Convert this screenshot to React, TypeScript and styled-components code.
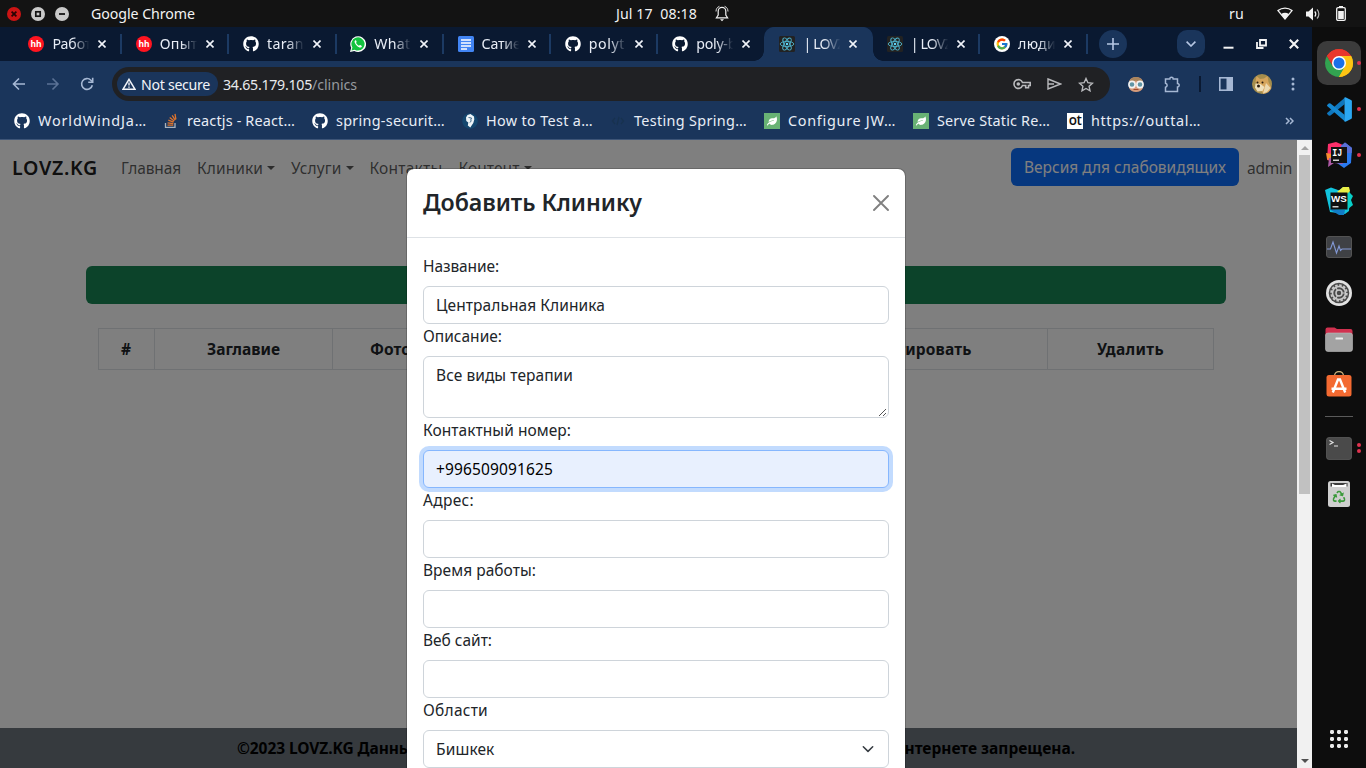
import React, { ReactNode, useLayoutEffect, useRef } from 'react';
import styled, { createGlobalStyle } from 'styled-components';
import { FaGithub, FaLeaf, FaRecycle } from 'react-icons/fa';
import { FcGoogle } from 'react-icons/fc';

const Global = createGlobalStyle`
  * { box-sizing: border-box; }
  html, body { margin: 0; padding: 0; overflow: hidden; background: #0d0d0d; }
  body { font-family: "Noto Sans", "Open Sans", sans-serif; }
  svg { display: block; flex: none; }
`;

/* ---------- text set to a fixed advance width ---------- */

const FitSpan = styled.span`
  display: inline-block;
  white-space: pre;
  flex: none;
`;

function Fit({ w, children }: { w: number; children: string }) {
  const ref = useRef<HTMLSpanElement>(null);
  useLayoutEffect(() => {
    const el = ref.current;
    if (!el) return;
    el.style.letterSpacing = '0px';
    const natural = el.getBoundingClientRect().width;
    el.style.letterSpacing = `${(w - natural) / children.length}px`;
  }, [w, children]);
  return <FitSpan ref={ref}>{children}</FitSpan>;
}

/* ---------- shell ---------- */

const Screen = styled.div`
  width: 1366px;
  height: 768px;
  display: grid;
  grid-template: 27px 741px / 1312px 54px;
  overflow: hidden;
`;

const TopBar = styled.header`
  grid-column: 1 / 3;
  display: grid;
  grid-template-columns: 616px 613px 1fr;
  align-items: center;
  background: #131313;
  color: #f2f2f2;
  font-size: 14.2px;
  line-height: 26px;
`;

const TopGroup = styled.div<{ $gap?: number; $pad?: number }>`
  display: flex;
  align-items: center;
  gap: ${(p) => p.$gap ?? 0}px;
  padding-left: ${(p) => p.$pad ?? 0}px;
`;

const StatusIcons = styled.div`
  display: flex;
  align-items: center;
  gap: 12px;
  margin-left: 33px;
`;

const AppName = styled.div`
  margin-left: 12px;
`;

const Browser = styled.main`
  display: flex;
  flex-direction: column;
  min-width: 0;
  background: #1a355b;
`;

/* ---------- tab strip ---------- */

const TabStrip = styled.div`
  height: 34px;
  display: flex;
  align-items: center;
  padding-left: 13.7px;
  background: #0a1931;
  color: #e8edf6;
  font-size: 14.2px;
`;

const TabBox = styled.div<{ $active?: boolean; $divider?: boolean }>`
  position: relative;
  width: 107.3px;
  height: 34px;
  display: flex;
  align-items: center;
  padding-left: 14.7px;
  background: ${(p) => (p.$active ? '#1a355b' : 'transparent')};
  border-radius: 10px 10px 0 0;
  ${(p) => p.$active && 'box-shadow: -1px 0 0 #1a355b, 1px 0 0 #1a355b;'}
  &::after {
    content: '';
    position: absolute;
    right: -1px;
    top: 7px;
    width: 2px;
    height: 20px;
    background: ${(p) => (p.$divider ? '#1c3a63' : 'transparent')};
  }
`;

const TabFoot = styled.i<{ $side: 'left' | 'right' }>`
  position: absolute;
  bottom: 0;
  ${(p) => p.$side}: -11px;
  width: 10px;
  height: 10px;
  background: radial-gradient(circle at ${(p) => (p.$side === 'left' ? '0 0' : '100% 0')}, transparent 9.5px, #1a355b 10px);
`;

const TabTitle = styled.div`
  width: 38px;
  margin: 0 8px 0 8px;
  overflow: hidden;
  line-height: 22px;
  mask-image: linear-gradient(90deg, #000 55%, transparent 98%);
`;

const RoundButton = styled.div<{ $radius: number; $left: number }>`
  width: 28px;
  height: 28px;
  margin-left: ${(p) => p.$left}px;
  border-radius: ${(p) => p.$radius}px;
  display: grid;
  place-items: center;
  background: #1a355b;
`;

const WindowControls = styled.div`
  display: flex;
  align-items: center;
  gap: 22px;
  margin-left: 18.5px;
`;

/* ---------- toolbar ---------- */

const Toolbar = styled.div`
  height: 46px;
  display: flex;
  align-items: center;
  padding: 0 17px 0 12px;
`;

const NavButtons = styled.div`
  width: 100px;
  display: flex;
  align-items: center;
  gap: 20px;
`;

const Omnibox = styled.div`
  width: 998px;
  height: 34px;
  display: flex;
  align-items: center;
  flex: none;
  padding: 0 16px 0 5px;
  border-radius: 17px;
  background: #202124;
  color: #e8eaed;
  font-size: 14.2px;
`;

const Chip = styled.div`
  width: 101px;
  height: 24px;
  display: flex;
  align-items: center;
  gap: 5px;
  padding-left: 5px;
  margin-right: 5px;
  border-radius: 12px;
  background: #1a355b;
  color: #f1f3f8;
`;

const UrlPath = styled.span`
  color: #969a9f;
`;

const OmniActions = styled.div`
  display: flex;
  align-items: center;
  gap: 16px;
  margin-left: auto;
`;

const ToolbarActions = styled.div`
  flex: 1;
  display: flex;
  align-items: center;
  justify-content: space-between;
  padding-left: 18px;
`;

const ToolbarDivider = styled.div`
  width: 2px;
  height: 16px;
  background: #0a1931;
`;

const Bookmarks = styled.div`
  height: 33px;
  display: flex;
  align-items: center;
  gap: 17px;
  padding: 0 18px 4px 14px;
  border-bottom: 1px solid #3e5577;
  color: #e8edf6;
  font-size: 14.4px;
`;

const Bookmark = styled.div`
  display: flex;
  align-items: center;
  gap: 8px;
  line-height: 22px;
`;

const LeafTile = styled.span`
  width: 16px;
  height: 16px;
  display: grid;
  place-items: center;
  background: #68b274;
  color: #fff;
`;

const OtTile = styled.span`
  width: 16px;
  height: 16px;
  background: #fff;
  color: #111;
  font: 600 13.5px/15px "Open Sans", sans-serif;
  letter-spacing: -0.5px;
  text-align: center;
`;

const More = styled.div`
  margin-left: auto;
`;

/* ---------- web page ---------- */

const Viewport = styled.section`
  position: relative;
  height: 628px;
  flex: none;
  overflow: hidden;
`;

const Page = styled.div`
  height: 100%;
  display: flex;
  flex-direction: column;
  background: #fff;
  color: #212529;
  font-size: 15.5px;
  line-height: 24px;
`;

const Navbar = styled.nav`
  height: 56px;
  display: flex;
  align-items: center;
  padding: 0 20px 0 12px;
`;

const Brand = styled.div`
  margin-right: 15px;
  font-size: 19.6px;
  font-weight: 600;
  color: rgba(0, 0, 0, 0.9);
`;

const NavLink = styled.div<{ $menu?: boolean }>`
  display: flex;
  align-items: center;
  padding: 0 8px;
  color: rgba(0, 0, 0, 0.65);
  &::after {
    content: '';
    display: ${(p) => (p.$menu ? 'block' : 'none')};
    margin-left: 4px;
    border: 4.8px solid transparent;
    border-top-color: currentColor;
    border-bottom: 0;
  }
`;

const NavRight = styled.div`
  display: flex;
  align-items: center;
  gap: 8px;
  margin-left: auto;
  color: rgba(0, 0, 0, 0.65);
`;

const PrimaryButton = styled.div`
  width: 228px;
  height: 38px;
  margin-top: -2px;
  padding: 7px 13px;
  border-radius: 6px;
  background: #0d6efd;
  color: #fff;
`;

const AddButton = styled.div`
  width: 1140px;
  height: 38px;
  margin: 70px auto 24px;
  border-radius: 6px;
  background: #198754;
`;

const Table = styled.div`
  width: 1116px;
  height: 42px;
  margin: 0 auto;
  display: grid;
  grid-template-columns: 56px 178px 116px 325px 274px 1fr;
  border: solid #dee2e6;
  border-width: 1px 0 1px 1px;
`;

const HeadCell = styled.div`
  display: grid;
  place-items: center;
  border-right: 1px solid #dee2e6;
  font-weight: 700;
`;

const Footer = styled.footer`
  height: 40px;
  margin-top: auto;
  padding: 0 237px;
  display: flex;
  align-items: center;
  justify-content: space-between;
  background: #6c757d;
  color: #000;
  font-weight: 700;
`;

/* ---------- modal ---------- */

const Backdrop = styled.div`
  position: absolute;
  inset: 0;
  display: flex;
  justify-content: center;
  align-items: flex-start;
  padding-top: 28px;
  background: rgba(0, 0, 0, 0.5);
`;

const Modal = styled.div`
  width: 500px;
  height: 800px;
  flex: none;
  border: 1px solid rgba(0, 0, 0, 0.175);
  border-radius: 8px;
  background: #fff;
  background-clip: padding-box;
  color: #212529;
  font-size: 15.5px;
  line-height: 24px;
`;

const ModalHeader = styled.div`
  height: 69px;
  display: flex;
  align-items: center;
  justify-content: space-between;
  padding: 0 16px;
  border-bottom: 1px solid #dee2e6;
`;

const ModalTitle = styled.h4`
  margin: 0 0 2px;
  font-size: 23.2px;
  font-weight: 600;
  line-height: 36px;
`;

const ModalBody = styled.div`
  padding: 16px;
`;

const Label = styled.div`
  height: 24px;
  margin-bottom: 8px;
`;

const Control = styled.div<{ $tall?: boolean; $focused?: boolean }>`
  height: ${(p) => (p.$tall ? 62 : 38)}px;
  display: flex;
  justify-content: space-between;
  padding: 6px 12px;
  border: 1px solid ${(p) => (p.$focused ? '#86b7fe' : '#ced4da')};
  border-radius: 6px;
  background: ${(p) => (p.$focused ? '#e8f0fe' : '#fff')};
  color: ${(p) => (p.$focused ? '#000' : '#212529')};
  ${(p) => p.$focused && 'box-shadow: 0 0 0 4px rgba(13, 110, 253, 0.25);'}
`;

const Corner = styled.span`
  align-self: flex-end;
  margin: 0 -11px -6px 0;
`;

const SelectArrow = styled.span`
  display: grid;
  place-items: center;
`;

/* ---------- scrollbar ---------- */

const Scrollbar = styled.div`
  position: absolute;
  top: 0;
  right: 0;
  bottom: 0;
  width: 15px;
  display: flex;
  flex-direction: column;
  align-items: center;
  background: #f1f1f1;
`;

const Arrow = styled.div<{ $down?: boolean }>`
  width: 15px;
  height: 15px;
  display: grid;
  place-items: center;
  &::before {
    content: '';
    border: 4px solid transparent;
    ${(p) => (p.$down ? 'border-top-color: #505050; border-bottom: 0;' : 'border-bottom-color: #a3a3a3; border-top: 0;')}
  }
`;

const Thumb = styled.div`
  width: 11px;
  height: 339px;
  margin-bottom: auto;
  background: #c1c1c1;
`;

/* ---------- dock ---------- */

const Dock = styled.aside`
  display: flex;
  flex-direction: column;
  align-items: center;
  padding-top: 13px;
  background: #0d0d0d;
`;

const DockItem = styled.div<{ $active?: boolean }>`
  position: relative;
  width: 44px;
  height: 44px;
  margin: 1px 0;
  display: grid;
  place-items: center;
  border-radius: 10px;
  background: ${(p) => (p.$active ? '#3b3b3b' : 'transparent')};
`;

const Running = styled.div`
  position: absolute;
  right: 0;
  top: 0;
  height: 44px;
  display: flex;
  flex-direction: column;
  justify-content: center;
  gap: 2px;
`;

const Dot = styled.i`
  width: 4px;
  height: 4px;
  border-radius: 50%;
  background: #e0324f;
`;

const DockDivider = styled.div`
  width: 28px;
  height: 1px;
  margin: 8px 0;
  background: #5a5a5a;
`;

const AppsGrid = styled.div`
  display: grid;
  grid-template-columns: repeat(3, 4px);
  gap: 3px;
  margin: auto 0 20px;
`;

const AppsDot = styled.i`
  width: 4px;
  height: 4px;
  border-radius: 1.4px;
  background: #ececec;
`;

/* ---------- icons ---------- */

const WinButton = ({ kind }: { kind: 'close' | 'max' | 'min' }) => (
  <svg width="14" height="14" viewBox="0 0 14 14">
    <circle cx="7" cy="7" r="7" fill={kind === 'close' ? '#cc1414' : '#c9c9c9'} />
    {kind === 'close' && <path d="M4.6 4.6l4.8 4.8M9.4 4.6L4.6 9.4" stroke="#260404" strokeWidth="1.7" />}
    {kind === 'max' && <rect x="4.8" y="4.8" width="4.4" height="4.4" fill="none" stroke="#131313" strokeWidth="1.7" />}
    {kind === 'min' && <path d="M4 7h6" stroke="#131313" strokeWidth="1.8" />}
  </svg>
);

const Bell = () => (
  <svg width="14" height="17" viewBox="0 0 14 17" fill="none" stroke="#f2f2f2" strokeWidth="1.2">
    <path d="M3.2 10V6.2a3.8 3.8 0 017.6 0V10l1.8 2.8H1.4L3.2 10z" />
    <path d="M4.4 1.3C2.2 2.2 1 4 1 6.5M9.6 1.3C11.8 2.2 13 4 13 6.5" strokeWidth=".9" />
    <path d="M5 14.3h4l-2 2z" fill="#f2f2f2" stroke="none" />
  </svg>
);

const Wifi = () => (
  <svg width="16" height="13" viewBox="0 0 16 13">
    <path d="M1 3.6C5 .3 11 .3 15 3.6L8 12z" fill="none" stroke="#f2f2f2" strokeWidth="1.3" />
    <path d="M4 7.2c2.4-1.8 5.6-1.8 8 0L8 12z" fill="#f2f2f2" />
  </svg>
);

const Volume = () => (
  <svg width="16" height="14" viewBox="0 0 16 14">
    <path d="M1 4.5h2.5L8 .5v13L3.5 9.5H1z" fill="#f2f2f2" />
    <path d="M9.7 4.5c1.4 1.3 1.4 3.7 0 5" fill="none" stroke="#f2f2f2" strokeWidth="1.3" />
    <path d="M12 2.5c2.5 2.5 2.5 6.5 0 9" fill="none" stroke="#b0b0b0" strokeWidth="1.2" />
  </svg>
);

const Battery = () => (
  <svg width="10" height="15" viewBox="0 0 10 15">
    <path d="M3 0h4v2H3z" fill="#f2f2f2" />
    <rect x=".7" y="1.7" width="8.6" height="12.6" rx="1.3" fill="none" stroke="#f2f2f2" strokeWidth="1.3" />
    <path d="M2.2 5h5.6v8H2.2z" fill="#f2f2f2" />
  </svg>
);

const Cross = () => (
  <svg width="8" height="8" viewBox="0 0 8 8" stroke="#f1f4fa" strokeWidth="1.6">
    <path d="M.5.5l7 7M7.5.5l-7 7" />
  </svg>
);

const HhIcon = () => (
  <svg width="16" height="16" viewBox="0 0 16 16">
    <circle cx="8" cy="8" r="8" fill="#ff1420" />
    <text x="8" y="11.3" textAnchor="middle" fontSize="8.5" fontWeight="700" fill="#fff" fontFamily="Noto Sans">hh</text>
  </svg>
);

const WhatsApp = () => (
  <svg width="16" height="16" viewBox="0 0 16 16">
    <path d="M0 16l1.2-4.2A7.9 7.9 0 118 16c-1.3 0-2.6-.3-3.7-.9z" fill="#fff" />
    <path d="M1.5 14.5l.9-3A6.6 6.6 0 118 14.6c-1.2 0-2.3-.3-3.3-.9z" fill="#13c33f" />
    <path d="M5.4 4.2c-.9.5-1 1.5-.6 2.5.9 2.2 2.5 3.9 4.7 4.7 1 .4 2 0 2.3-1 .1-.4 0-.5-.3-.7l-1.3-.6c-.6-.2-.7.8-1.2.7C7.6 9.2 6.7 8.2 6.1 7c-.2-.5.7-.8.5-1.3L6.1 4.5c-.1-.3-.4-.4-.7-.3z" fill="#fff" />
  </svg>
);

const Docs = () => (
  <svg width="16" height="16" viewBox="0 0 16 16">
    <rect width="16" height="16" rx="1.5" fill="#4285f4" />
    <path d="M3 4h10M3 7h10M3 10h10M3 13h6" stroke="#fff" strokeWidth="1.5" />
  </svg>
);

const ReactIcon = () => (
  <svg width="16" height="16" viewBox="0 0 16 16" fill="none" stroke="#4fb3cc" strokeWidth=".9">
    <rect width="16" height="16" rx="1.5" fill="#222" stroke="none" />
    <ellipse cx="8" cy="8" rx="6.8" ry="2.6" />
    <ellipse cx="8" cy="8" rx="6.8" ry="2.6" transform="rotate(60 8 8)" />
    <ellipse cx="8" cy="8" rx="6.8" ry="2.6" transform="rotate(120 8 8)" />
    <circle cx="8" cy="8" r="1.2" fill="#61dafb" stroke="none" />
  </svg>
);

const GoogleIcon = () => (
  <svg width="16" height="16" viewBox="0 0 16 16">
    <circle cx="8" cy="8" r="8" fill="#fff" />
    <FcGoogle x="1.5" y="1.5" size={13} />
  </svg>
);

const Github = () => <FaGithub size={16} color="#fff" />;

const StackOverflow = () => (
  <svg width="15" height="16" viewBox="0 0 15 16" fill="none" strokeWidth="1.3">
    <path d="M1.5 10v4.4H11V10" stroke="#a9b2bd" />
    <path d="M3.5 12.2h5.8M3.6 9.8l5.7.8M4.3 7.2l5.3 1.9M5.7 4.6l4.5 3.4M8.2 2.3l3 4.8M11 .9l.9 5.5" stroke="#e0742c" />
  </svg>
);

const Spaghetti = () => (
  <svg width="16" height="16" viewBox="0 0 16 16">
    <circle cx="8" cy="8" r="7.8" fill="#15476f" />
    <path d="M4 4.5L5.5 2 8.5 1l3.5 2.5.3 3-1 3.5-3 4.500-2.500-2 .5-3-2-1.500z" fill="#eef4f8" />
    <path d="M6.5 4.5l3 .5-1 2.5M8 9.500l1.500-2" stroke="#15476f" strokeWidth=".8" fill="none" />
  </svg>
);

const FaintCode = () => (
  <svg width="16" height="16" viewBox="0 0 16 16" fill="none" stroke="#18324f" strokeWidth="1.2">
    <path d="M5 5L2.5 8 5 11M11 5l2.500 3-2.500 3M9 4l-2 8" />
  </svg>
);

const Leaf = () => (
  <LeafTile>
    <FaLeaf size={10} />
  </LeafTile>
);

const ChromeLogo = () => (
  <svg width="28" height="28" viewBox="0 0 28 28">
    <path d="M14 14L1.88 7A14 14 0 0126.12 7z" fill="#e8372c" />
    <path d="M14 14L26.12 7A14 14 0 0114 28z" fill="#fdc413" />
    <path d="M14 28A14 14 0 011.88 7L8 17.5l6 3.5 6-3.5z" fill="#32a350" />
    <path d="M14 7h12.12A14 14 0 0114 28l6-10.5z" fill="#fdc413" />
    <path d="M1.88 7A14 14 0 0126.12 7H14l-6 10.5z" fill="#e8372c" />
    <circle cx="14" cy="14" r="7" fill="#fff" />
    <circle cx="14" cy="14" r="5.5" fill="#1b70e8" />
  </svg>
);

const VsCode = () => (
  <svg width="25" height="25" viewBox="0 0 25 25">
    <path d="M18 .5l-.5 6.8L3.5 18.5 2 18.7.4 17.2c-.5-.5-.5-1 0-1.5z" fill="#0f76bd" />
    <path d="M18 24.5l-.5-6.8L3.5 6.5 2 6.3.4 7.8c-.5.5-.5 1 0 1.5z" fill="#1588d1" />
    <path d="M17.5.6L18.5.3 24 3c.6.3.9.7.9 1.3v16.4c0 .6-.3 1-.9 1.3l-5.5 2.7-1-.3z" fill="#2ba7f2" />
  </svg>
);

const IntelliJ = () => (
  <svg width="26" height="26" viewBox="0 0 26 26">
    <path d="M2 2l8-2 7 3 2 5-10 12-8-2z" fill="#fc2f6b" />
    <path d="M0 11l6 1v8l-5-3z" fill="#f98b30" />
    <path d="M15 4l4-3.5L26 6l-1 15-7 5-7-5z" fill="#2a7af0" />
    <path d="M15 4l4-3.5L26 6l-.3 5H15z" fill="#5a6fd6" />
    <path d="M3 16l-1 9 6-4 9 1-3-7z" fill="#ad59a5" />
    <rect x="5" y="5" width="16" height="16" fill="#111" />
    <text x="6.3" y="14" fontSize="10" fontWeight="700" fill="#fff" fontFamily="Liberation Mono" textLength="10" lengthAdjust="spacingAndGlyphs">IJ</text>
    <path d="M7 18.2h6" stroke="#fff" strokeWidth="1.2" />
  </svg>
);

const WebStorm = () => (
  <svg width="28" height="28" viewBox="0 0 28 28">
    <path d="M0 3l6-2.5 7 2.5 12 3-1 18-4 3-15-2z" fill="#12c4dd" />
    <path d="M13 5l5-5h5l2 6 3 3-2 4 2 5-5 4z" fill="#07cfc8" />
    <path d="M12 5l6-5h6l1 4-5 5z" fill="#e9ee46" />
    <path d="M4 22l10 6h5l1-5z" fill="#117cc7" />
    <rect x="5.5" y="5.5" width="17" height="17" fill="#101010" />
    <text x="6" y="14.8" fontSize="9.5" fontWeight="700" fill="#fff" fontFamily="Liberation Sans" textLength="15.8" lengthAdjust="spacingAndGlyphs">WS</text>
    <path d="M7.5 19.8h6" stroke="#fff" strokeWidth="1.2" />
  </svg>
);

const Monitor = () => (
  <svg width="26" height="22" viewBox="0 0 26 22">
    <rect x=".5" y=".5" width="25" height="21" rx="2.5" fill="#3f4145" stroke="#535353" />
    <path d="M1 13h3.5L7 6l3.5 11L13 10l1.5 4.5L16 13h9" fill="none" stroke="#8399d6" strokeWidth="1.1" />
  </svg>
);

const Settings = () => (
  <svg width="26" height="26" viewBox="0 0 26 26" fill="none">
    <circle cx="13" cy="13" r="13" fill="#e2e2e2" />
    <circle cx="13" cy="13" r="10.3" fill="#4a4a4a" />
    <circle cx="13" cy="13" r="7.8" stroke="#c9c9c9" strokeWidth="1.8" strokeDasharray="2.5 1.583" />
    <circle cx="13" cy="13" r="6.5" stroke="#c9c9c9" strokeWidth="1.6" />
    <circle cx="13" cy="13" r="3" stroke="#c9c9c9" strokeWidth="1.5" />
    <path d="M15.5 13H20M11.7 10.7L9.5 7M11.7 15.3L9.5 19" stroke="#c9c9c9" strokeWidth="1.2" />
  </svg>
);

const Files = () => (
  <svg width="28" height="25" viewBox="0 0 28 25">
    <path d="M.5 9V2.5Q.5.5 2.5.5h7l2.5 1.5h13.5q2 0 2 2V9z" fill="#d0314f" />
    <rect x=".5" y="6" width="27" height="18.5" rx="2.5" fill="#a3a3a3" stroke="#bcbcbc" strokeWidth=".6" />
    <rect x="10.5" y="10.5" width="7.5" height="2" rx=".6" fill="#f0f0f0" />
  </svg>
);

const Software = () => (
  <svg width="26" height="28" viewBox="0 0 26 28">
    <path d="M8.5 6V5a4.5 4.5 0 019 0v1" fill="none" stroke="#c9ae79" strokeWidth="1.3" />
    <rect x=".5" y="4" width="25" height="21.5" rx="2.5" fill="#f36a31" />
    <path d="M6.8 21.5L12 8.5h2l5.2 13M5.5 17.8h15" fill="none" stroke="#fff" strokeWidth="2.4" />
  </svg>
);

const Terminal = () => (
  <svg width="26" height="23" viewBox="0 0 26 23">
    <rect x=".5" y=".5" width="25" height="22" rx="2.5" fill="#4a4a4a" stroke="#626262" strokeWidth=".7" />
    <path d="M3.5 3.5l3.5 2-3.5 2M8 9h4" fill="none" stroke="#e4e4e4" strokeWidth="1.2" />
  </svg>
);

const Trash = () => (
  <svg width="22" height="26" viewBox="0 0 22 26">
    <rect width="22" height="26" rx="2.5" fill="#cfcfcf" />
    <path d="M2.5 2h17v3.5h-17z" fill="#3b3b3b" />
    <path d="M4 2.5l3 1.5h8l3.5-1.5V6H4z" fill="#fff" />
    <FaRecycle x="4.5" y="9.5" size={13} color="#3b9a3b" />
  </svg>
);

const ArrowIcon = ({ forward }: { forward?: boolean }) => (
  <svg width="14" height="14" viewBox="0 0 14 14" fill="none" stroke={forward ? '#5b7296' : '#a6b8d4'} strokeWidth="1.6">
    <path d={forward ? 'M1 7h11M6.5 1.5L12 7l-5.5 5.5' : 'M13 7h-11M7 1.5L1.5 7 7 12.5'} />
  </svg>
);

const Reload = () => (
  <svg width="14" height="14" viewBox="0 0 14 14" fill="none" stroke="#a6b8d4" strokeWidth="1.6">
    <path d="M12.3 8.2A5.4 5.4 0 1110.9 3.2l1.6 1.6" />
    <path d="M12.7.8v4.5H8.2" />
  </svg>
);

const Warning = () => (
  <svg width="14" height="12" viewBox="0 0 14 12">
    <path d="M7 1.3L12.9 11.2H1.1z" fill="none" stroke="#f1f3f8" strokeWidth="1.5" />
    <path d="M7 4.5v3M7 8.4v1.3" stroke="#f1f3f8" strokeWidth="1.4" />
  </svg>
);

const Key = () => (
  <svg width="18" height="12" viewBox="0 0 18 12" fill="none" stroke="#b9babd" strokeWidth="1.6">
    <path d="M9.5 4.5H17.2v3h-1.7v2.3h-2.8V7.5H9.5a4.4 4.4 0 110-3z" />
    <circle cx="5.3" cy="6" r="1.8" fill="#b9babd" stroke="none" />
  </svg>
);

const Send = () => (
  <svg width="15" height="12" viewBox="0 0 15 12" fill="none" stroke="#b9babd" strokeWidth="1.4">
    <path d="M1 1l12.5 5L1 11V1zM1 6h6" />
  </svg>
);

const Star = () => (
  <svg width="16" height="15" viewBox="0 0 16 15" fill="none" stroke="#b9babd" strokeWidth="1.4">
    <path d="M8 1.5l1.9 4.2 4.6.5-3.4 3.1.9 4.5L8 11.5l-4 2.3.9-4.5L1.5 6.2l4.6-.5z" />
  </svg>
);

const Face = () => (
  <svg width="16" height="15" viewBox="0 0 16 15">
    <path d="M1 6Q1 .5 8 0q7 .5 7 6v5q-2 4-7 4t-7-4z" fill="#d69b7a" />
    <path d="M1 5.5Q2 .5 8 0q6 .5 7 5.5Q8 2 1 5.5z" fill="#a8845c" />
    <circle cx="4" cy="7.5" r="3.1" fill="#5f95a5" stroke="#f3f3f3" strokeWidth="1.6" />
    <circle cx="12" cy="7.5" r="3.1" fill="#5f95a5" stroke="#f3f3f3" strokeWidth="1.6" />
    <path d="M5.5 12.5h5" stroke="#a0482f" />
  </svg>
);

const Puzzle = () => (
  <svg width="17" height="17" viewBox="0 0 17 17" fill="none" stroke="#a6b8d4" strokeWidth="1.5">
    <path d="M2.5 3h4.3a1.700 1.700 0 013.400 0h4.300v4.600a1.700 1.700 0 010 3.400v4.500h-12v-4.200a2.100 2.100 0 000-4.100z" />
  </svg>
);

const SidePanel = () => (
  <svg width="14" height="14" viewBox="0 0 14 14">
    <rect x=".8" y=".8" width="12.4" height="12.4" fill="none" stroke="#a6b8d4" strokeWidth="1.6" />
    <path d="M7.5 0H14v14H7.5z" fill="#a6b8d4" />
  </svg>
);

const Doge = () => (
  <svg width="20" height="20" viewBox="0 0 20 20">
    <circle cx="10" cy="10" r="10" fill="#a58d4c" />
    <path d="M3.5 8L4.5 2l3.5 3 4-.5 3.5-2.5 1 6 3 6a10 10 0 01-8 6z" fill="#d6a55c" />
    <path d="M3.5 9.5l5 .5 4 3-2 4-5 .5-2.5-4z" fill="#efe0bd" />
    <path d="M14 9l4.5 5-3.5 4-4 1.5z" fill="#ecd9b0" />
    <circle cx="5.5" cy="8.5" r="1" fill="#2b1d0f" />
    <circle cx="10.5" cy="8.5" r="1" fill="#2b1d0f" />
    <circle cx="6.5" cy="12" r="1.5" fill="#2b1d0f" />
  </svg>
);

const Kebab = () => (
  <svg width="4" height="14" viewBox="0 0 4 14" fill="#a6b8d4">
    <circle cx="2" cy="2" r="1.5" />
    <circle cx="2" cy="7" r="1.5" />
    <circle cx="2" cy="12" r="1.5" />
  </svg>
);

/* ---------- data ---------- */

interface TabData {
  icon: ReactNode;
  title: string;
  w: number;
  active?: boolean;
  divider?: boolean;
}

const tabs: TabData[] = [
  { icon: <HhIcon />, title: 'Работ', w: 39, divider: true },
  { icon: <HhIcon />, title: 'Опыт', w: 38, divider: true },
  { icon: <Github />, title: 'taran', w: 37, divider: true },
  { icon: <WhatsApp />, title: 'What', w: 36, divider: true },
  { icon: <Docs />, title: 'Сатие', w: 39, divider: true },
  { icon: <Github />, title: 'polyt', w: 36, divider: true },
  { icon: <Github />, title: 'poly-b', w: 40 },
  { icon: <ReactIcon />, title: '| LOVZ', w: 41, active: true },
  { icon: <ReactIcon />, title: '| LOVZ', w: 41, divider: true },
  { icon: <GoogleIcon />, title: 'люди', w: 38, divider: true },
];

const bookmarks: { icon: ReactNode; title: string; w: number }[] = [
  { icon: <Github />, title: 'WorldWindJa…', w: 109 },
  { icon: <StackOverflow />, title: 'reactjs - React…', w: 108 },
  { icon: <Github />, title: 'spring-securit…', w: 109 },
  { icon: <Spaghetti />, title: 'How to Test a…', w: 107 },
  { icon: <FaintCode />, title: 'Testing Spring…', w: 113 },
  { icon: <Leaf />, title: 'Configure JW…', w: 108 },
  { icon: <Leaf />, title: 'Serve Static Re…', w: 113 },
  { icon: <OtTile>ot</OtTile>, title: 'https://outtal…', w: 110 },
];

const dockApps: { icon: ReactNode; windows?: number; active?: boolean }[] = [
  { icon: <ChromeLogo />, windows: 1, active: true },
  { icon: <VsCode />, windows: 1 },
  { icon: <IntelliJ />, windows: 1 },
  { icon: <WebStorm /> },
  { icon: <Monitor /> },
  { icon: <Settings /> },
  { icon: <Files /> },
  { icon: <Software /> },
];

const columns = [
  { title: '#', w: 11 },
  { title: 'Заглавие', w: 73 },
  { title: 'Фото', w: 41 },
  { title: 'Описание', w: 80 },
  { title: 'Редактировать', w: 122 },
  { title: 'Удалить', w: 67 },
];

function DockApp({ icon, windows = 0, active }: { icon: ReactNode; windows?: number; active?: boolean }) {
  return (
    <DockItem $active={active}>
      {icon}
      <Running>
        {Array.from({ length: windows }, (_, i) => (
          <Dot key={i} />
        ))}
      </Running>
    </DockItem>
  );
}

function Field({ label, labelWidth, children }: { label: string; labelWidth: number; children: ReactNode }) {
  return (
    <div>
      <Label>
        <Fit w={labelWidth}>{label}</Fit>
      </Label>
      {children}
    </div>
  );
}

export default function App() {
  return (
    <Screen>
      <Global />
      <TopBar>
        <TopGroup $gap={10} $pad={7}>
          <WinButton kind="close" />
          <WinButton kind="max" />
          <WinButton kind="min" />
          <AppName>
            <Fit w={104}>Google Chrome</Fit>
          </AppName>
        </TopGroup>
        <TopGroup $gap={18}>
          <Fit w={81}>Jul 17  08:18</Fit>
          <Bell />
        </TopGroup>
        <TopGroup>
          <Fit w={15}>ru</Fit>
          <StatusIcons>
            <Wifi />
            <Volume />
            <TopGroup $pad={3}>
              <Battery />
            </TopGroup>
          </StatusIcons>
        </TopGroup>
      </TopBar>

      <Browser>
        <TabStrip>
          {tabs.map((t, i) => (
            <TabBox key={i} $active={t.active} $divider={t.divider}>
              {t.active && <TabFoot $side="left" />}
              {t.active && <TabFoot $side="right" />}
              {t.icon}
              <TabTitle>
                <Fit w={t.w}>{t.title}</Fit>
              </TabTitle>
              <Cross />
            </TabBox>
          ))}
          <RoundButton $radius={14} $left={12.3}>
            <svg width="12" height="12" viewBox="0 0 12 12" stroke="#b7c7e4" strokeWidth="1.6">
              <path d="M6 0v12M0 6h12" />
            </svg>
          </RoundButton>
          <RoundButton $radius={10} $left={50}>
            <svg width="10" height="6" viewBox="0 0 10 6" fill="none" stroke="#b7c7e4" strokeWidth="1.6">
              <path d="M.6.6L5 5 9.4.6" />
            </svg>
          </RoundButton>
          <WindowControls>
            <svg width="11" height="10" viewBox="0 0 11 10">
              <path d="M.5 8.7h10" stroke="#f4f4f4" strokeWidth="2" />
            </svg>
            <svg width="11" height="10" viewBox="0 0 11 10" fill="none" stroke="#f4f4f4" strokeWidth="1.8">
              <path d="M4 1h6v5.5H4zM1 3v6h6.5" />
            </svg>
            <svg width="10" height="10" viewBox="0 0 10 10" stroke="#f4f4f4" strokeWidth="2.1">
              <path d="M.8.8l8.4 8.4M9.2.8L.8 9.2" />
            </svg>
          </WindowControls>
        </TabStrip>

        <Toolbar>
          <NavButtons>
            <ArrowIcon />
            <ArrowIcon forward />
            <Reload />
          </NavButtons>
          <Omnibox>
            <Chip>
              <Warning />
              <Fit w={69}>Not secure</Fit>
            </Chip>
            <Fit w={89}>34.65.179.105</Fit>
            <UrlPath>
              <Fit w={45}>/clinics</Fit>
            </UrlPath>
            <OmniActions>
              <Key />
              <Send />
              <Star />
            </OmniActions>
          </Omnibox>
          <ToolbarActions>
            <Face />
            <Puzzle />
            <ToolbarDivider />
            <SidePanel />
            <Doge />
            <Kebab />
          </ToolbarActions>
        </Toolbar>

        <Bookmarks>
          {bookmarks.map((b) => (
            <Bookmark key={b.title}>
              {b.icon}
              <Fit w={b.w}>{b.title}</Fit>
            </Bookmark>
          ))}
          <More>
            <svg width="9" height="8" viewBox="0 0 9 8" fill="none" stroke="#a6b8d4" strokeWidth="1.5">
              <path d="M1 1l3 3-3 3M5 1l3 3-3 3" />
            </svg>
          </More>
        </Bookmarks>

        <Viewport>
          <Page>
            <Navbar>
              <Brand>
                <Fit w={86}>LOVZ.KG</Fit>
              </Brand>
              <NavLink>
                <Fit w={60}>Главная</Fit>
              </NavLink>
              <NavLink $menu>
                <Fit w={66}>Клиники</Fit>
              </NavLink>
              <NavLink $menu>
                <Fit w={50.5}>Услуги</Fit>
              </NavLink>
              <NavLink>
                <Fit w={73}>Контакты</Fit>
              </NavLink>
              <NavLink $menu>
                <Fit w={61}>Контент</Fit>
              </NavLink>
              <NavRight>
                <PrimaryButton>
                  <Fit w={202}>Версия для слабовидящих</Fit>
                </PrimaryButton>
                <Fit w={45}>admin</Fit>
              </NavRight>
            </Navbar>
            <AddButton />
            <Table>
              {columns.map((c) => (
                <HeadCell key={c.title}>
                  <Fit w={c.w}>{c.title}</Fit>
                </HeadCell>
              ))}
            </Table>
            <Footer>
              <Fit w={184}>©2023 LOVZ.KG Данные</Fit>
              <Fit w={181}>интернете запрещена.</Fit>
            </Footer>
          </Page>

          <Backdrop>
            <Modal>
              <ModalHeader>
                <ModalTitle>
                  <Fit w={219}>Добавить Клинику</Fit>
                </ModalTitle>
                <svg width="16" height="16" viewBox="0 0 16 16" stroke="#808080" strokeWidth="1.9" strokeLinecap="round">
                  <path d="M1 1l14 14M15 1L1 15" />
                </svg>
              </ModalHeader>
              <ModalBody>
                <Field label="Название:" labelWidth={76}>
                  <Control>
                    <Fit w={169}>Центральная Клиника</Fit>
                  </Control>
                </Field>
                <Field label="Описание:" labelWidth={79}>
                  <Control $tall>
                    <Fit w={137}>Все виды терапии</Fit>
                    <Corner>
                      <svg width="9" height="9" viewBox="0 0 9 9" stroke="#555" strokeWidth="1">
                        <path d="M1 8l7-7M5 8l3-3" />
                      </svg>
                    </Corner>
                  </Control>
                </Field>
                <Field label="Контактный номер:" labelWidth={148}>
                  <Control $focused>
                    <Fit w={117}>+996509091625</Fit>
                  </Control>
                </Field>
                <Field label="Адрес:" labelWidth={51}>
                  <Control />
                </Field>
                <Field label="Время работы:" labelWidth={113}>
                  <Control />
                </Field>
                <Field label="Веб сайт:" labelWidth={69}>
                  <Control />
                </Field>
                <Field label="Области" labelWidth={65}>
                  <Control>
                    <Fit w={58.5}>Бишкек</Fit>
                    <SelectArrow>
                      <svg width="16" height="16" viewBox="0 0 16 16" fill="none" stroke="#343a40" strokeWidth="1.5" strokeLinecap="round" strokeLinejoin="round">
                        <path d="M3.3 5.7L8 10.4l4.7-4.7" />
                      </svg>
                    </SelectArrow>
                  </Control>
                </Field>
              </ModalBody>
            </Modal>
          </Backdrop>

          <Scrollbar>
            <Arrow />
            <Thumb />
            <Arrow $down />
          </Scrollbar>
        </Viewport>
      </Browser>

      <Dock>
        {dockApps.map((a, i) => (
          <DockApp key={i} {...a} />
        ))}
        <DockDivider />
        <DockApp icon={<Terminal />} windows={2} />
        <DockApp icon={<Trash />} />
        <AppsGrid>
          {Array.from({ length: 9 }, (_, i) => (
            <AppsDot key={i} />
          ))}
        </AppsGrid>
      </Dock>
    </Screen>
  );
}
